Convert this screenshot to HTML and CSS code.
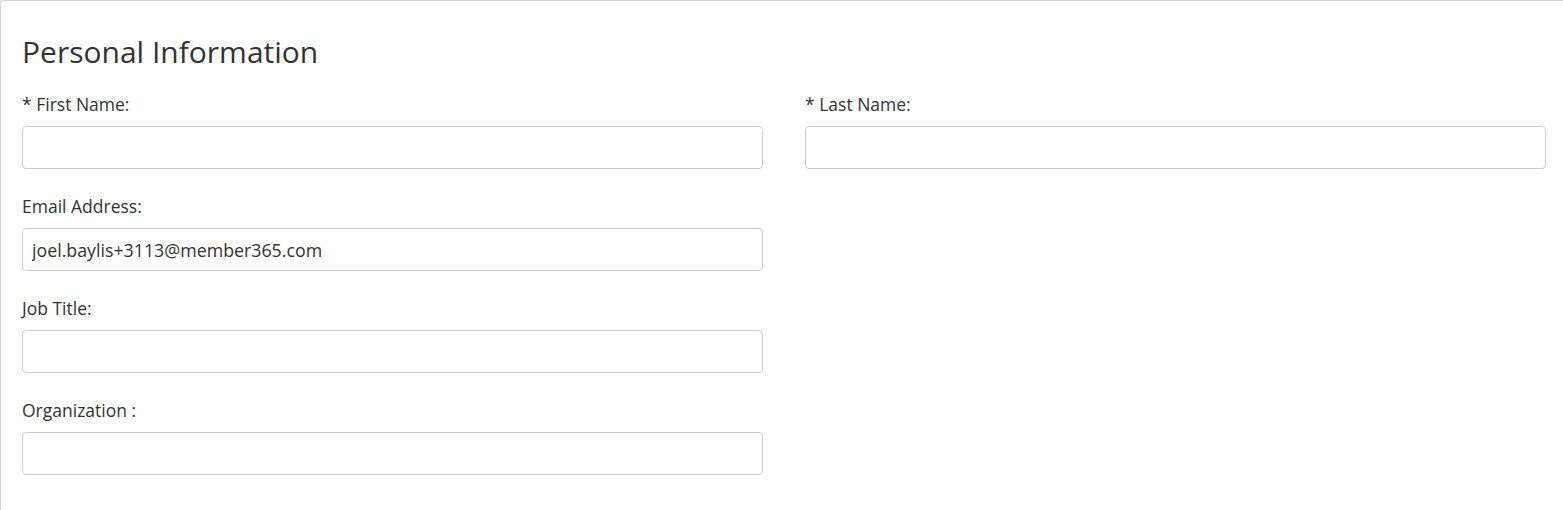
FILE: index.html
```html
<!DOCTYPE html>
<html lang="en">
<head>
  <meta charset="UTF-8" />
  <meta name="viewport" content="width=device-width, initial-scale=1" />
  <title>Personal Information</title>
  <link rel="stylesheet" href="styles.css">
</head>
<body>
  <div class="panel">
    <h2>Personal Information</h2>

    <form class="form-grid">
      <div class="field">
        <label for="firstName">* First Name:</label>
        <input type="text" id="firstName" />
      </div>
      <div class="field">
        <label for="lastName">* Last Name:</label>
        <input type="text" id="lastName" />
      </div>

      <div class="field left">
        <label for="email">Email Address:</label>
        <input type="text" id="email" value="joel.baylis+3113@member365.com" />
      </div>

      <div class="field left">
        <label for="jobTitle">Job Title:</label>
        <input type="text" id="jobTitle" />
      </div>

      <div class="field left">
        <label for="organization">Organization :</label>
        <input type="text" id="organization" />
      </div>
    </form>
  </div>
</body>
</html>
```

FILE: styles.css
```css
html, body {
  margin: 0;
  height: 100%;
  overflow: hidden;
  background: #ffffff;
  font-family: 'Open Sans', sans-serif;
  color: #333;
}

/* panel runs off the right and bottom edge, like the screenshot */
.panel {
  width: 1567px;
  height: 100vh;
  box-sizing: border-box;
  border: 1px solid #d4d4d4;
  border-bottom: none;
  border-radius: 4px 4px 0 0;
  padding: 34px 21px 0 21px;
}

h2 {
  margin: 0 0 24px 0;
  font-size: 30px;
  font-weight: 400;
  line-height: 1.1;
  color: #333;
}

.form-grid {
  display: grid;
  grid-template-columns: 741px 741px;
  column-gap: 42px;
  row-gap: 25px;
}

.field {
  display: flex;
  flex-direction: column;
}

.field.left {
  grid-column: 1;
}

.field label {
  font-size: 17.5px;
  line-height: 24px;
  margin-bottom: 10px;
  color: #333;
}

.field input {
  box-sizing: border-box;
  height: 43px;
  padding: 0 9px;
  border: 1px solid #cfcfcf;
  border-radius: 4px;
  font-family: 'Open Sans', sans-serif;
  font-size: 17.8px;
  color: #333;
  background: #fff;
  outline: none;
}
```
